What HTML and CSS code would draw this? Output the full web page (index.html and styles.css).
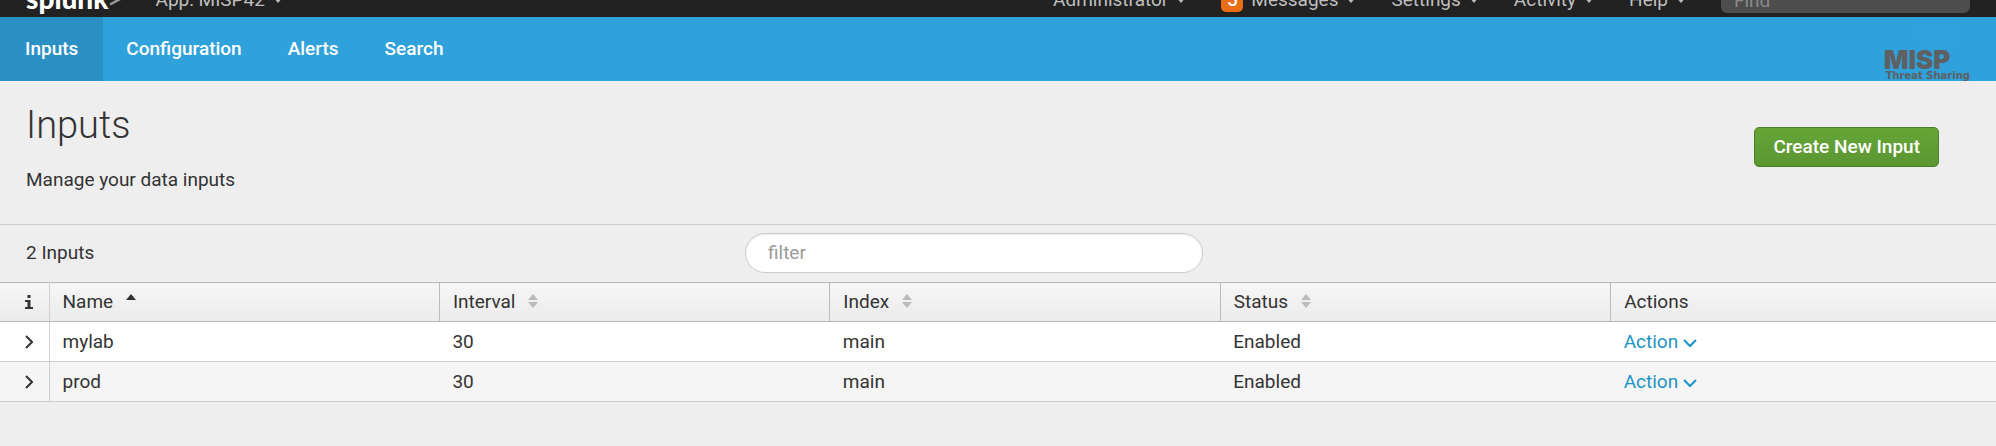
FILE: index.html
```html
<!DOCTYPE html>
<html lang="en">
<head>
<meta charset="utf-8">
<title>Inputs | Splunk</title>
<link rel="stylesheet" href="styles.css">
</head>
<body>
<svg class="sprite" aria-hidden="true">
  <symbol id="caret" viewBox="0 0 10 6"><path d="M0 0h10L5 6z"/></symbol>
  <symbol id="sort" viewBox="0 0 10 14"><path d="M0 6 5 0l5 6zM0 8h10l-5 6z"/></symbol>
  <symbol id="sort-up" viewBox="0 0 10 14"><path d="M0 6 5 0l5 6z"/></symbol>
  <symbol id="chevron-right" viewBox="0 0 8 14"><path d="M1 1l6 6-6 6" fill="none" stroke="currentColor" stroke-width="2"/></symbol>
  <symbol id="chevron-down" viewBox="0 0 14 9"><path d="M1 1l6 6 6-6" fill="none" stroke="currentColor" stroke-width="2"/></symbol>
  <symbol id="info" viewBox="0 0 8 14"><path d="M2.500 0h3v3h-3zM0 5h5.500v7H8v2H0v-2h2.500V7H0z"/></symbol>
</svg>

<header class="topbar">
  <div class="topbar-row">
    <a class="brand" href="#">splunk<svg class="brand-mark" viewBox="0 0 14 15"><path d="M1 1.500 12 7.500 1 13.500" fill="none" stroke="currentColor" stroke-width="2.500"/></svg></a>
    <button class="menu" type="button">App: MISP42 <svg class="caret"><use href="#caret"/></svg></button>
    <div class="menus">
      <button class="menu" type="button">Administrator <svg class="caret"><use href="#caret"/></svg></button>
      <button class="menu" type="button"><span class="badge">5</span>Messages <svg class="caret"><use href="#caret"/></svg></button>
      <button class="menu" type="button">Settings <svg class="caret"><use href="#caret"/></svg></button>
      <button class="menu" type="button">Activity <svg class="caret"><use href="#caret"/></svg></button>
      <button class="menu" type="button">Help <svg class="caret"><use href="#caret"/></svg></button>
      <input class="find" type="search" placeholder="Find" aria-label="Find">
    </div>
  </div>
</header>

<nav class="appnav">
  <a class="tab active" href="#">Inputs</a>
  <a class="tab" href="#">Configuration</a>
  <a class="tab" href="#">Alerts</a>
  <a class="tab" href="#">Search</a>
  <div class="misp">
    <svg class="misp-bubbles" viewBox="0 0 46 32" aria-hidden="true">
      <g fill="none" stroke="#33a5e2">
        <path d="M5 1h31q2 0 2 2v17q0 2-2 2H16l-6 4v-4H5q-2 0-2-2V3q0-2 2-2z"/>
        <path d="M43 9v17h-3v5l-5-4H17"/>
        <circle cx="12" cy="11" r="3"/><circle cx="20" cy="11" r="3"/><circle cx="28" cy="11" r="3"/>
      </g>
    </svg>
    <span class="misp-name">MISP</span>
    <span class="misp-sub">Threat Sharing</span>
  </div>
</nav>

<main>
  <section class="page-head">
    <div>
      <h1>Inputs</h1>
      <p>Manage your data inputs</p>
    </div>
    <button class="create" type="button">Create New Input</button>
  </section>

  <section class="toolbar">
    <span>2 Inputs</span>
    <input class="filter" type="text" placeholder="filter" aria-label="filter">
  </section>

  <table class="inputs">
    <colgroup><col class="c-info"><col class="c-data"><col class="c-data"><col class="c-data"><col class="c-data"><col></colgroup>
    <thead>
      <tr>
        <th><svg class="info" role="img" aria-label="Info"><use href="#info"/></svg></th>
        <th>Name <svg class="sort sorted"><use href="#sort-up"/></svg></th>
        <th>Interval <svg class="sort"><use href="#sort"/></svg></th>
        <th>Index <svg class="sort"><use href="#sort"/></svg></th>
        <th>Status <svg class="sort"><use href="#sort"/></svg></th>
        <th>Actions</th>
      </tr>
    </thead>
    <tbody>
      <tr>
        <td><button class="expand" type="button" aria-label="Expand mylab"><svg class="chev-r"><use href="#chevron-right"/></svg></button></td>
        <td>mylab</td><td>30</td><td>main</td><td>Enabled</td>
        <td><a class="action" href="#">Action <svg class="chev-d"><use href="#chevron-down"/></svg></a></td>
      </tr>
      <tr>
        <td><button class="expand" type="button" aria-label="Expand prod"><svg class="chev-r"><use href="#chevron-right"/></svg></button></td>
        <td>prod</td><td>30</td><td>main</td><td>Enabled</td>
        <td><a class="action" href="#">Action <svg class="chev-d"><use href="#chevron-down"/></svg></a></td>
      </tr>
    </tbody>
  </table>
</main>
</body>
</html>
```

FILE: styles.css
```css
* { box-sizing: border-box; }

body {
  margin: 0;
  background: #eee;
  color: #333;
  font: 19px/24px Roboto, "Liberation Sans", sans-serif;
}

button, input { font: inherit; }
a { text-decoration: none; }
svg { fill: currentColor; }
.sprite { display: none; }

/* Global bar, scrolled so that only its lower part shows */
.topbar {
  display: flex;
  flex-direction: column;
  justify-content: flex-end;
  height: 17px;
  overflow: hidden;
  background: #222;
}
.topbar-row {
  display: flex;
  flex: none;
  align-items: center;
  height: 34px;
  padding: 0 26px;
}
.brand {
  display: flex;
  align-items: center;
  margin-right: 33px;
  padding-bottom: 4px;
  color: #fff;
  font: 900 28px/30px Lato, sans-serif;
}
.brand-mark { width: 14px; height: 15px; color: #999; }
.menu {
  display: flex;
  align-items: center;
  gap: 8px;
  padding: 0;
  border: 0;
  background: none;
  color: #bfbfbf;
}
.caret { width: 10px; height: 6px; }
.menus {
  display: flex;
  align-items: center;
  gap: 35px;
  margin-left: auto;
}
.badge {
  width: 22px;
  border-radius: 5px;
  background: #e96c16;
  color: #fff;
  font-weight: 500;
  text-align: center;
}
.find {
  width: 249px;
  height: 26px;
  padding: 0 13px;
  border: 0;
  border-radius: 6px;
  background: #4d4d4d;
  color: #fff;
}
.find::placeholder { color: #8a8a8a; }

.appnav {
  display: flex;
  height: 64px;
  padding-right: 26px;
  background: #2fa1db;
}
.tab {
  display: flex;
  align-items: center;
  padding: 0 23px;
  color: #fff;
  font-weight: 500;
}
.tab.active { padding: 0 25px; background: #2b91c5; }
.misp {
  display: flex;
  flex-direction: column;
  margin-left: auto;
  color: #5f6062;
}
.misp-bubbles { flex: none; align-self: flex-end; width: 46px; height: 32px; margin-right: 10px; }
.misp-name { font: 900 26px/22px Inter, sans-serif; }
.misp-sub { padding-left: 2px; font: 700 10px/10px "DejaVu Sans", sans-serif; }

.page-head {
  display: flex;
  align-items: center;
  justify-content: space-between;
  padding: 20px 57px 32px 26px;
  border-bottom: 1px solid #ccc;
}
h1 { margin: 0 0 19px; font-size: 38px; font-weight: 300; line-height: 48px; }
p { margin: 0; }
.create {
  height: 40px;
  padding: 0 18px;
  border: 1px solid #4b8029;
  border-radius: 5px;
  background: linear-gradient(#65a637, #5b9632);
  color: #fff;
  font-weight: 500;
}

.toolbar {
  display: grid;
  grid-template-columns: 719px 458px;
  align-items: center;
  padding: 8px 26px 9px;
}
.filter {
  height: 40px;
  padding: 0 22px 2px;
  border: 1px solid #ccc;
  border-radius: 20px;
  background: #fff;
  box-shadow: inset 0 1px 2px rgba(0, 0, 0, .08);
  color: #333;
}
.filter::placeholder { color: #999; }

.inputs {
  width: 100%;
  border-collapse: collapse;
  table-layout: fixed;
}
.c-info { width: 49px; }
.c-data { width: 19.56%; }
th, td { height: 40px; padding: 0 13px; font-weight: 400; text-align: left; }
th { height: 39px; border: 1px solid #bbb; background: linear-gradient(#f6f6f6, #ebebeb); }
th:first-child { border-left: 0; border-right-color: #d0d0d0; padding: 0 0 0 25px; }
th:last-child { border-right: 0; }
td { border-bottom: 1px solid #ccc; background: #fff; }
td:first-child { border-right: 1px solid #d0d0d0; padding: 0 0 0 25px; }
tbody tr:nth-child(even) td { background: #f5f5f5; }
.info { display: block; width: 8px; height: 14px; }
.sort { width: 10px; height: 14px; margin-left: 8px; color: #bbb; }
.sorted { color: #333; }
.expand { display: block; padding: 0; border: 0; background: none; color: #333; }
.chev-r { display: block; width: 8px; height: 14px; }
.action { color: #1e93c6; }
.chev-d { width: 14px; height: 9px; }
```
